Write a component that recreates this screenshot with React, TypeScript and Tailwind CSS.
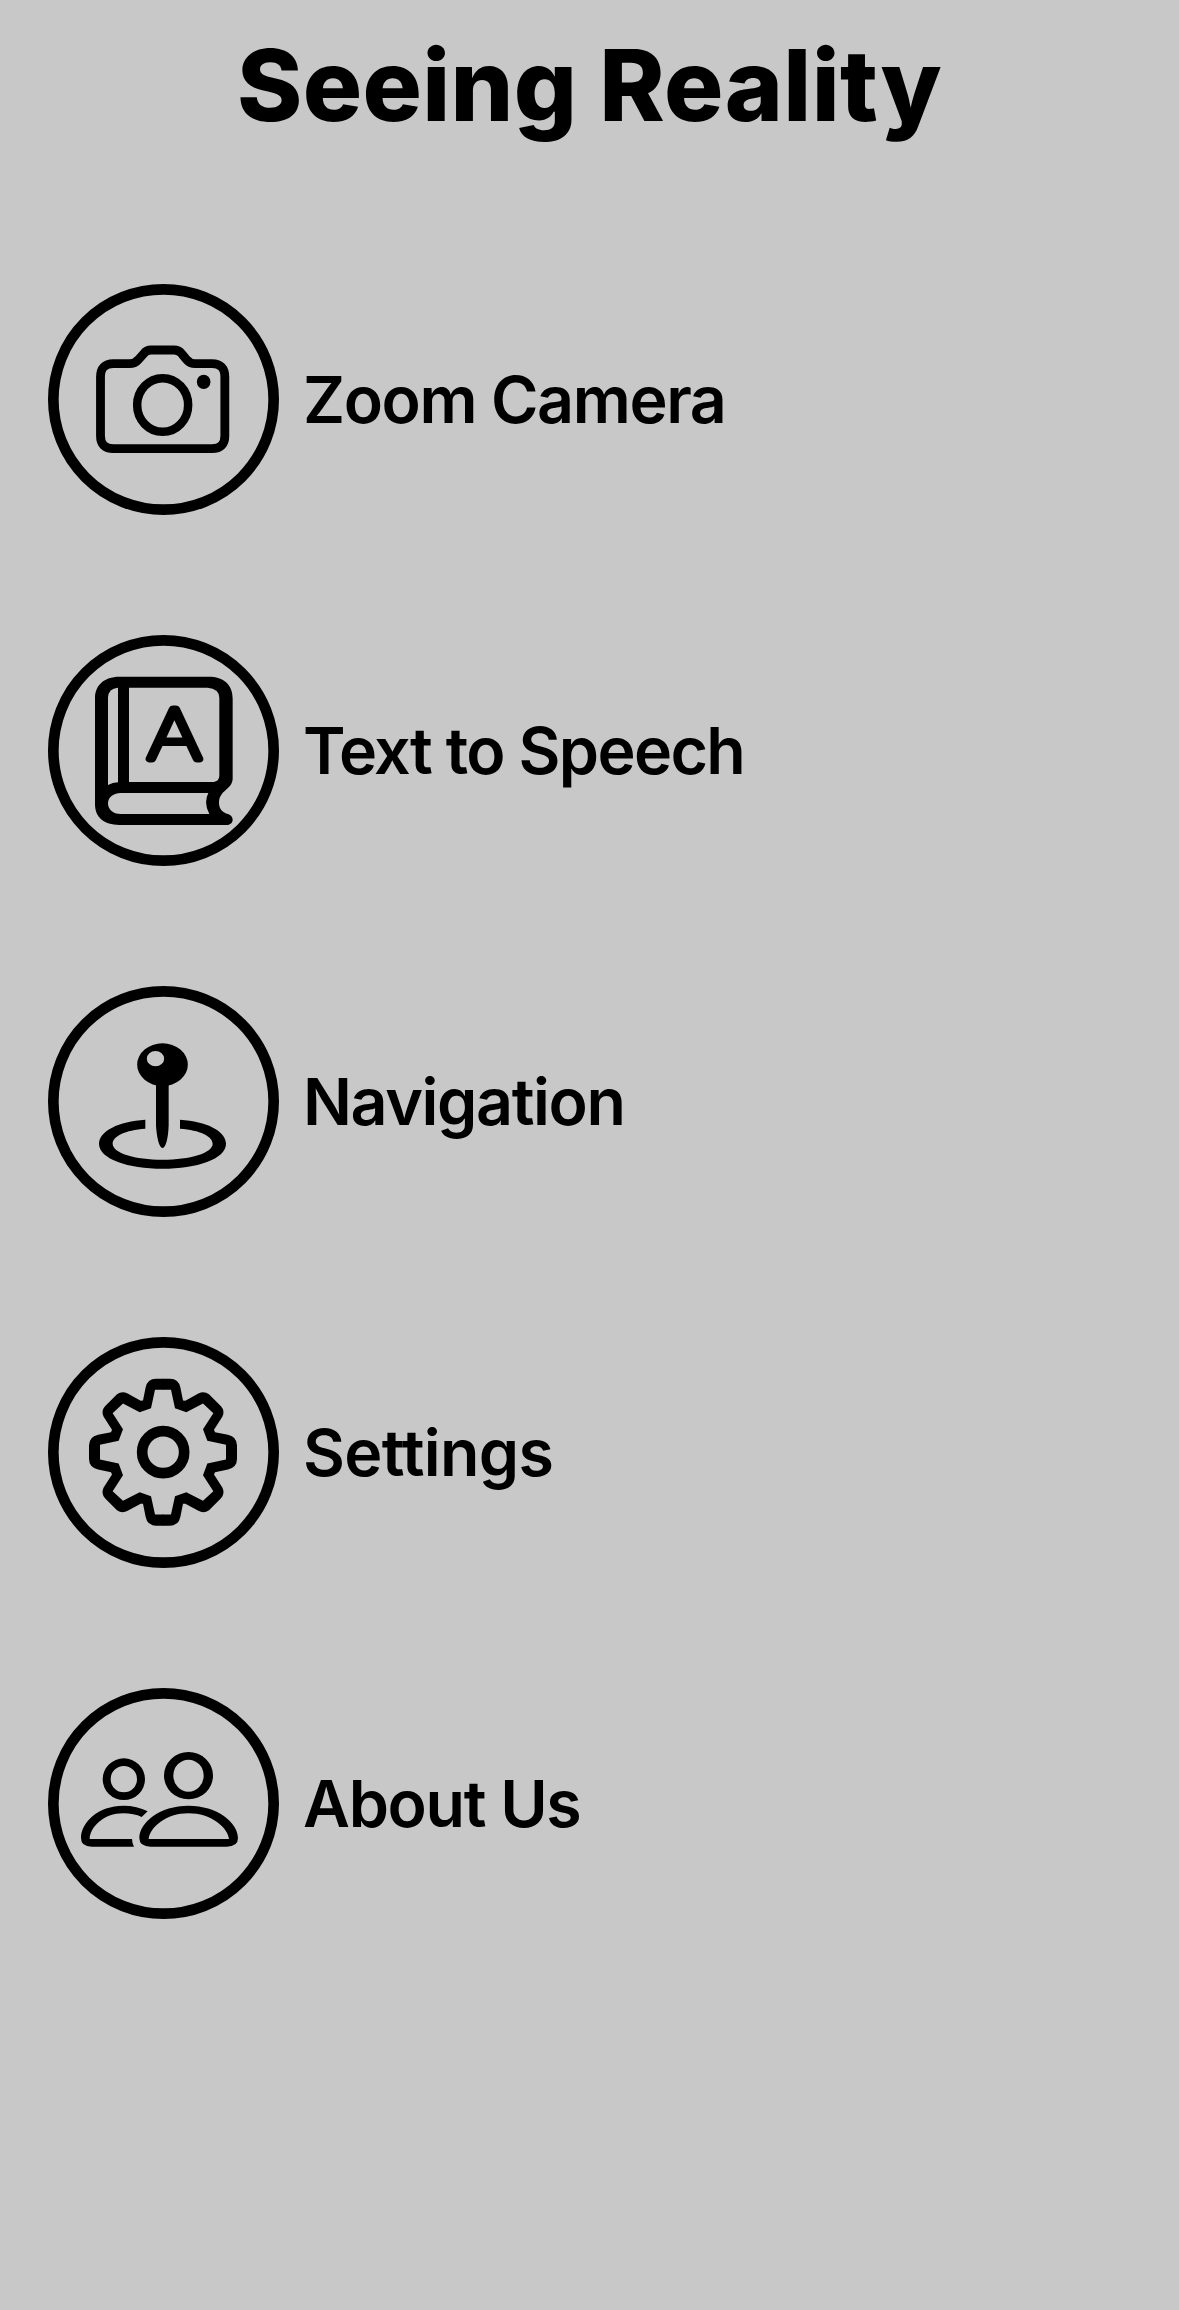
import type { ReactNode } from "react";

const GEAR_QUARTER =
  "M-1 -220.5H21Q47 -220 52 -194.5L60 -155L67 -154.5L106 -176Q123 -185 138 -174L174 -138Q187 -123 178 -106L153 -67L156 -60L195 -52Q222 -46 222 -20V1H189V-22L133 -34L120 -69L151 -117L120 -146L70 -120L36 -132L24 -187H-1Z";

function CameraIcon() {
  return (
    <>
      <path
        d="M181.500 306Q181.500 266 220 266H268Q285 266 296 253L312 235Q320 225 333 225H402Q416 225 424 235L439 253Q450 266 466 266H516Q554.500 266 554.500 306V482Q554.500 521 516 521H220Q181.500 521 181.500 482Z"
        fill="none"
        stroke="black"
        strokeWidth="26.500"
      />
      <ellipse cx="368" cy="390" rx="76.500" ry="80.500" fill="none" stroke="black" strokeWidth="25.500" />
      <ellipse cx="491" cy="320.500" rx="20.500" ry="21.500" />
    </>
  );
}

function BookIcon() {
  return (
    <>
      <path
        fillRule="evenodd"
        d="M165 216C165 178 192 152 238 152H505C552 152 578 176 578 218V458Q578 473 563 487C550 499 537 508 537 530C537 549 548 559 564 564C584 570 583 597 558 597H238C192 597 165 574 165 535Z
        M234 185V469Q218 470 204 477V215Q205 187 234 185Z
        M267 185H503Q537 188 538 215V450Q537 466 521 468H267Z
        M243 501H505Q490 530 508 564H243C191 563 191 501 243 501Z"
      />
      <text
        transform="translate(403 400) scale(1.25 1)"
        textAnchor="middle"
        fontSize="206"
        className="font-['Inter',sans-serif] font-thin"
        stroke="black"
        strokeWidth="20.500"
        strokeLinejoin="round"
      >
        A
      </text>
    </>
  );
}

function PinIcon() {
  return (
    <>
      <path
        fillRule="evenodd"
        d="M291.500 263A76 64 0 0 1 443.500 263A76 64 0 0 1 291.500 263ZM320.500 245A26 23 0 0 0 372.500 245A26 23 0 0 0 320.500 245Z"
      />
      <path d="M348 315H386V445C385 480 378 513 367.500 513S350 480 348 445Z" />
      <path d="M316 428V455C255 459 218 478 218 500C218 528 285 548 367.500 548S518 528 518 500C518 478 480 459 420 455V428C500 433 558 462 558 500C558 546 470 575 367.500 575S177 546 177 500C177 462 236 433 316 428Z" />
    </>
  );
}

function GearIcon() {
  return (
    <>
      <g transform="translate(369 372.500)">
        <path d={GEAR_QUARTER} />
        <path d={GEAR_QUARTER} transform="scale(-1 1)" />
        <path d={GEAR_QUARTER} transform="scale(1 -1)" />
        <path d={GEAR_QUARTER} transform="scale(-1 -1)" />
      </g>
      <circle cx="369.500" cy="372.500" r="63" fill="none" stroke="black" strokeWidth="32" />
    </>
  );
}

function PeopleIcon() {
  return (
    <path
      fillRule="evenodd"
      d="M188 300.500A63.500 62.500 0 0 1 315 300.500A63.500 62.500 0 0 1 188 300.500Z
      M212 300.500A39.500 39.500 0 0 0 291 300.500A39.500 39.500 0 0 0 212 300.500Z
      M372 290A73.500 71 0 0 1 519 290A73.500 71 0 0 1 372 290Z
      M400 290A45.500 48 0 0 0 491 290A45.500 48 0 0 0 400 290Z
      M298 477C298 430 360 380 445.500 380S594 430 594 477Q594 503 560 503H332Q298 503 298 477Z
      M326 480C330 445 378 403 445.500 403S563 445 567 480Z
      M282 503H155Q123 503 123 477C123 430 175 380 250 380C278 380 302 386 323 397L305 414C290 407 270 403 250 403C190 403 150 445 149 480H276Q276 492 282 503Z"
    />
  );
}

const items: { label: string; icon: ReactNode; tracking: string }[] = [
  { label: "Zoom Camera", icon: <CameraIcon />, tracking: "tracking-[-1.400px]" },
  { label: "Text to Speech", icon: <BookIcon />, tracking: "tracking-[-1.650px]" },
  { label: "Navigation", icon: <PinIcon />, tracking: "tracking-[-1.400px]" },
  { label: "Settings", icon: <GearIcon />, tracking: "tracking-[-0.700px]" },
  { label: "About Us", icon: <PeopleIcon />, tracking: "tracking-[-1.300px]" },
];

export default function App() {
  return (
    <main className="h-[2310px] w-[1179px] overflow-hidden bg-[#c8c8c8] font-['Inter',sans-serif] text-black">
      <h1 className="pt-[25px] text-center text-[99px] leading-[120px] font-extrabold tracking-[0.300px]">
        Seeing Reality
      </h1>
      <nav className="mt-[130px] flex flex-col gap-[101px] pl-10">
        {items.map((item) => (
          <a key={item.label} className="flex h-[250px] items-center gap-[13px]">
            <svg viewBox="0 0 750 750" className="size-[250px] shrink-0" aria-hidden="true">
              <circle cx="370.500" cy="373.500" r="330.500" fill="none" stroke="black" strokeWidth="32" />
              {item.icon}
            </svg>
            <span className={`text-[64.500px] leading-[78px] font-semibold whitespace-nowrap ${item.tracking}`}>
              {item.label}
            </span>
          </a>
        ))}
      </nav>
    </main>
  );
}
